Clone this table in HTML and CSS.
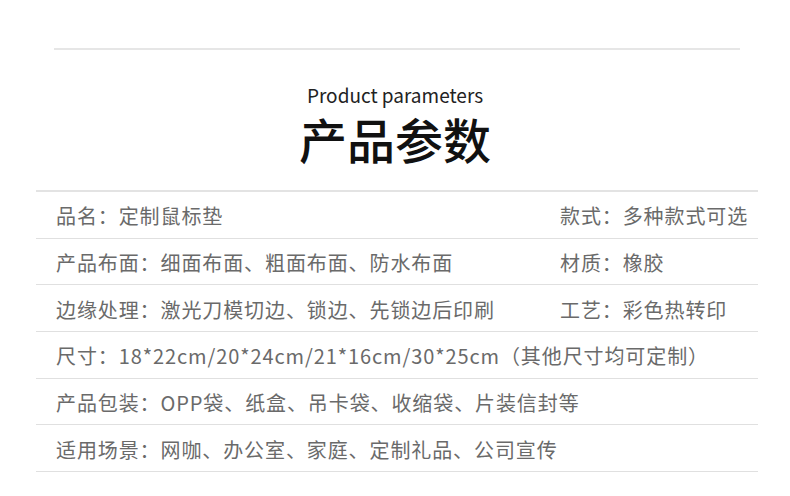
FILE: index.html
```html
<!DOCTYPE html>
<html lang="zh-CN">
<head>
<meta charset="utf-8">
<title>产品参数</title>
<link rel="stylesheet" href="styles.css">
</head>
<body>
<div class="page">
  <div class="top-rule"></div>
  <header class="heading">
    <p class="subtitle">Product parameters</p>
    <h1 class="title">产品参数</h1>
  </header>
  <div class="params">
    <div class="row">
      <span class="cell">品名：定制鼠标垫</span>
      <span class="cell">款式：多种款式可选</span>
    </div>
    <div class="row">
      <span class="cell">产品布面：细面布面、粗面布面、防水布面</span>
      <span class="cell">材质：橡胶</span>
    </div>
    <div class="row">
      <span class="cell">边缘处理：激光刀模切边、锁边、先锁边后印刷</span>
      <span class="cell">工艺：彩色热转印</span>
    </div>
    <div class="row">
      <span class="cell full">尺寸：18*22cm/20*24cm/21*16cm/30*25cm（其他尺寸均可定制）</span>
    </div>
    <div class="row">
      <span class="cell full">产品包装：OPP袋、纸盒、吊卡袋、收缩袋、片装信封等</span>
    </div>
    <div class="row">
      <span class="cell full">适用场景：网咖、办公室、家庭、定制礼品、公司宣传</span>
    </div>
  </div>
</div>
</body>
</html>
```

FILE: styles.css
```css
html, body {
  margin: 0;
  padding: 0;
  background: #ffffff;
}

body {
  font-family: "Noto Sans CJK SC", "Noto Sans", sans-serif;
  width: 790px;
  height: 496px;
  overflow: hidden;
}

.page {
  padding-top: 48px;
}

.top-rule {
  margin-left: 54px;
  width: 686px;
  height: 2px;
  background: #e6e6e6;
}

.heading {
  text-align: center;
  margin-top: 33px;
}

.subtitle {
  margin: 0;
  font-size: 19px;
  line-height: 24px;
  color: #222;
}

.title {
  margin: 12px 0 0;
  font-family: "Liberation Sans", "Noto Sans CJK SC", sans-serif;
  font-size: 48px;
  line-height: 47px;
  font-weight: 500;
  color: #111;
  letter-spacing: 0;
}

.params {
  margin: 24px 0 0 36px;
  width: 722px;
  border-top: 2px solid #e3e3e3;
}

.row {
  display: grid;
  grid-template-columns: 1fr 198px;
  align-items: center;
  padding-left: 20px;
  padding-top: 2px;
  box-sizing: border-box;
  border-bottom: 1px solid #e0e0e0;
  height: 46.7px;
}

.cell {
  font-size: 20px;
  letter-spacing: 0.9px;
  color: #6a6a6a;
  white-space: nowrap;
}

.cell.full {
  grid-column: 1 / -1;
}
```
